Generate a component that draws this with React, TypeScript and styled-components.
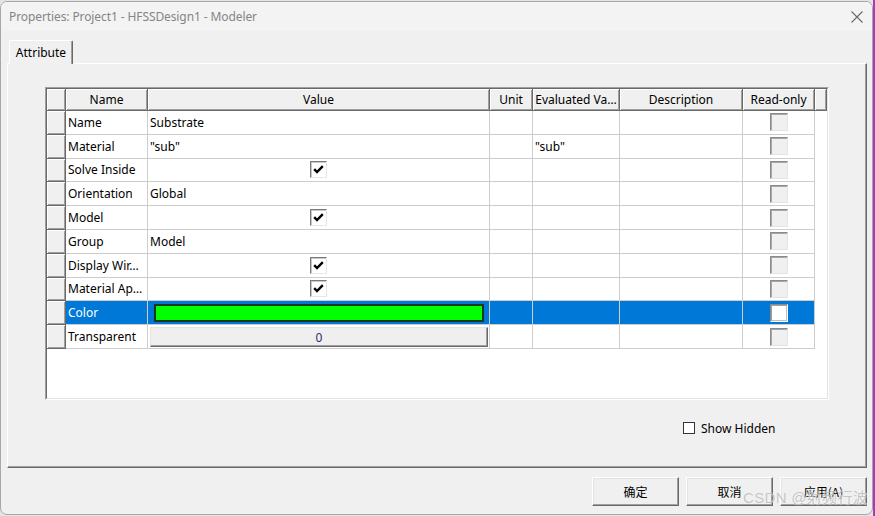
import React from 'react';
import styled, { createGlobalStyle } from 'styled-components';

const GlobalStyle = createGlobalStyle`
  html, body { margin: 0; padding: 0; }
  body {
    width: 875px;
    height: 516px;
    overflow: hidden;
    background: linear-gradient(to right, #e4e4e4 873px, #a53cba 873px);
    font-family: "Noto Sans", "Noto Sans CJK SC", sans-serif;
    font-size: 12px;
    color: #000;
  }
`;

const Window = styled.div`
  position: relative;
  margin-top: 1px;
  width: 873px;
  height: 514px;
  box-sizing: border-box;
  border: 1px solid #a8a8a8;
  border-radius: 7px;
  background: #f0f0f0;
  display: flex;
  flex-direction: column;
  overflow: hidden;
`;

const TitleBar = styled.div`
  height: 29px;
  flex: none;
  display: flex;
  align-items: center;
  justify-content: space-between;
  padding: 0 8px 0 8px;
  background: #f3f3f3;
`;

const Title = styled.span`
  font-size: 12px;
  color: #858585;
  letter-spacing: -0.1px;
`;

const CloseButton = styled.span`
  display: flex;
  width: 14px;
  height: 14px;
  margin-right: 0px;
`;

const Body = styled.div`
  flex: 1;
  display: flex;
  flex-direction: column;
  padding: 9px 5px 0 6px;
`;

const TabStrip = styled.div`
  display: flex;
  height: 23px;
  padding-left: 2px;
  position: relative;
  z-index: 1;
`;

const Tab = styled.div`
  width: 64px;
  height: 24px;
  box-sizing: border-box;
  display: flex;
  align-items: center;
  justify-content: center;
  background: #f0f0f0;
  border-top: 1px solid #ffffff;
  border-left: 1px solid #ffffff;
  border-right: 1px solid #696969;
  box-shadow: inset -1px 0 0 #a0a0a0;
  border-radius: 2px 2px 0 0;
  font-size: 12px;
`;

const Panel = styled.div`
  width: 860px;
  height: 405px;
  box-sizing: border-box;
  border-top: 1px solid #ffffff;
  border-left: 1px solid #ffffff;
  border-right: 1px solid #696969;
  border-bottom: 1px solid #696969;
  box-shadow: inset -1px -1px 0 #a0a0a0;
  padding: 23px 0 0 37px;
  display: flex;
  flex-direction: column;
`;

const GridFrame = styled.div`
  width: 784px;
  height: 313px;
  box-sizing: border-box;
  border-top: 1px solid #a0a0a0;
  border-left: 1px solid #a0a0a0;
  border-right: 1px solid #ffffff;
  border-bottom: 1px solid #ffffff;
`;

const GridInner = styled.div`
  height: 100%;
  box-sizing: border-box;
  border-top: 1px solid #696969;
  border-left: 1px solid #696969;
  border-right: 1px solid #e3e3e3;
  border-bottom: 1px solid #e3e3e3;
  background: #ffffff;
  overflow: hidden;
`;

const Grid = styled.div`
  display: grid;
  grid-template-columns: 19px 82px 342px 43px 87px 123px 72px 12px;
  grid-template-rows: 22px repeat(10, 23.8px);
`;

const HeaderCell = styled.div`
  box-sizing: border-box;
  background: #f0f0f0;
  border-right: 1px solid #696969;
  border-bottom: 1px solid #696969;
  box-shadow: inset 1px 1px 0 #ffffff, inset -1px -1px 0 #a0a0a0;
  display: flex;
  align-items: center;
  justify-content: center;
  white-space: nowrap;
  overflow: hidden;
  font-size: 12px;
`;

const RowHead = styled.div`
  box-sizing: border-box;
  background: #f0f0f0;
  border-right: 1px solid #696969;
  border-bottom: 1px solid #696969;
  box-shadow: inset 1px 1px 0 #ffffff, inset -1px -1px 0 #a0a0a0;
`;

const Cell = styled.div<{ $selected?: boolean; $center?: boolean }>`
  box-sizing: border-box;
  background: ${(p) => (p.$selected ? '#0078d7' : '#ffffff')};
  color: ${(p) => (p.$selected ? '#ffffff' : '#000000')};
  border-right: 1px solid #cdcdcd;
  border-bottom: 1px solid #cdcdcd;
  display: flex;
  align-items: center;
  justify-content: ${(p) => (p.$center ? 'center' : 'flex-start')};
  padding-left: ${(p) => (p.$center ? '0' : '2px')};
  white-space: nowrap;
  overflow: hidden;
  font-size: 12px;
`;

const Filler = styled.div``;

const CheckBox = styled.span`
  width: 17px;
  height: 17px;
  box-sizing: border-box;
  background: #ffffff;
  border-top: 1px solid #7a7a7a;
  border-left: 1px solid #7a7a7a;
  border-right: 1px solid #e6e6e6;
  border-bottom: 1px solid #e6e6e6;
  box-shadow: inset 1px 1px 0 #c8c8c8;
  display: flex;
  align-items: center;
  justify-content: center;
`;

const ReadOnlyBox = styled.span<{ $selected?: boolean }>`
  width: 18px;
  height: 18px;
  box-sizing: border-box;
  background: ${(p) => (p.$selected ? '#ffffff' : '#f0f0f0')};
  border-top: 1px solid #8a8a8a;
  border-left: 1px solid #8a8a8a;
  border-right: 1px solid ${(p) => (p.$selected ? '#ffffff' : '#e3e3e3')};
  border-bottom: 1px solid ${(p) => (p.$selected ? '#ffffff' : '#e3e3e3')};
  box-shadow: ${(p) =>
    p.$selected ? 'inset 1px 1px 0 #a0a0a0, inset -1px -1px 0 #c0c0c0' : 'inset 1px 1px 0 #a8a8a8'};
`;

const ColorCell = styled(Cell)`
  padding: 3px 5px 2px 6px;
  align-items: stretch;
`;

const ColorBar = styled.div`
  flex: 1;
  background: #00ff00;
  border: 2px solid #1c361c;
  box-sizing: border-box;
`;

const ButtonCell = styled(Cell)`
  padding: 2px 1px 1px 2px;
  align-items: stretch;
`;

const ValueButton = styled.div`
  flex: 1;
  box-sizing: border-box;
  background: #efefef;
  border-top: 1px solid #e3e3e3;
  border-left: 1px solid #e3e3e3;
  border-right: 1px solid #696969;
  border-bottom: 1px solid #696969;
  box-shadow: inset -1px -1px 0 #a0a0a0;
  display: flex;
  align-items: center;
  justify-content: center;
  color: #23336b;
  font-size: 12px;
`;

const ShowHiddenRow = styled.label`
  display: flex;
  align-items: center;
  gap: 6px;
  margin: 21px 0 0 638px;
  height: 14px;
  font-size: 12px;
`;

const SmallBox = styled.span`
  width: 12px;
  height: 12px;
  box-sizing: border-box;
  background: #ffffff;
  border: 1px solid #333333;
`;

const ButtonRow = styled.div`
  display: flex;
  justify-content: flex-end;
  gap: 7px;
  margin-top: 9px;
  padding-right: 0px;
`;

const DialogButton = styled.button`
  width: 87px;
  height: 29px;
  box-sizing: border-box;
  background: #f0f0f0;
  border-top: 1px solid #ffffff;
  border-left: 1px solid #ffffff;
  border-right: 1px solid #696969;
  border-bottom: 1px solid #696969;
  box-shadow: inset -1px -1px 0 #a0a0a0, inset 1px 1px 0 #e3e3e3;
  font-family: "Noto Sans CJK SC", "Noto Sans", sans-serif;
  font-size: 12px;
  color: #000;
  padding: 0;
`;

const Watermark = styled.span`
  position: absolute;
  right: 4px;
  bottom: 7px;
  font-family: "Liberation Sans", "Noto Sans CJK SC", sans-serif;
  font-size: 15px;
  color: rgba(150, 150, 150, 0.55);
  text-shadow: 0 0 1px rgba(255, 255, 255, 0.9);
  pointer-events: none;
  letter-spacing: 0.3px;
`;

const Check = () => (
  <svg width="11" height="9" viewBox="0 0 11 9">
    <path d="M1.2 4.2 L4 7 L9.8 1.2" fill="none" stroke="#000" strokeWidth="2.4" />
  </svg>
);

type Row = {
  name: string;
  value?: string;
  evaluated?: string;
  kind?: 'text' | 'check' | 'color' | 'button';
  selected?: boolean;
};

const rows: Row[] = [
  { name: 'Name', value: 'Substrate' },
  { name: 'Material', value: '"sub"', evaluated: '"sub"' },
  { name: 'Solve Inside', kind: 'check' },
  { name: 'Orientation', value: 'Global' },
  { name: 'Model', kind: 'check' },
  { name: 'Group', value: 'Model' },
  { name: 'Display Wir…', kind: 'check' },
  { name: 'Material Ap…', kind: 'check' },
  { name: 'Color', kind: 'color', selected: true },
  { name: 'Transparent', kind: 'button', value: '0' },
];

const headers = ['Name', 'Value', 'Unit', 'Evaluated Va…', 'Description', 'Read-only'];

function ValueCell({ row }: { row: Row }) {
  const sel = row.selected;
  if (row.kind === 'check') {
    return (
      <Cell $center $selected={sel}>
        <CheckBox>
          <Check />
        </CheckBox>
      </Cell>
    );
  }
  if (row.kind === 'color') {
    return (
      <ColorCell $selected={sel}>
        <ColorBar />
      </ColorCell>
    );
  }
  if (row.kind === 'button') {
    return (
      <ButtonCell $selected={sel}>
        <ValueButton>{row.value}</ValueButton>
      </ButtonCell>
    );
  }
  return <Cell $selected={sel}>{row.value}</Cell>;
}

export default function App() {
  return (
    <>
      <GlobalStyle />
      <Window>
        <TitleBar>
          <Title>Properties: Project1 - HFSSDesign1 - Modeler</Title>
          <CloseButton>
            <svg width="14" height="14" viewBox="0 0 14 14">
              <path d="M1.5 1.5 L12.5 12.5 M12.5 1.5 L1.5 12.5" stroke="#6a6a6a" strokeWidth="1.1" />
            </svg>
          </CloseButton>
        </TitleBar>
        <Body>
          <TabStrip>
            <Tab>Attribute</Tab>
          </TabStrip>
          <Panel>
            <GridFrame>
              <GridInner>
                <Grid>
                  <HeaderCell />
                  {headers.map((h) => (
                    <HeaderCell key={h}>{h}</HeaderCell>
                  ))}
                  <HeaderCell />
                  {rows.map((r) => (
                    <React.Fragment key={r.name}>
                      <RowHead />
                      <Cell $selected={r.selected}>{r.name}</Cell>
                      <ValueCell row={r} />
                      <Cell $selected={r.selected} />
                      <Cell $selected={r.selected}>{r.evaluated}</Cell>
                      <Cell $selected={r.selected} />
                      <Cell $center $selected={r.selected}>
                        <ReadOnlyBox $selected={r.selected} />
                      </Cell>
                      <Filler />
                    </React.Fragment>
                  ))}
                </Grid>
              </GridInner>
            </GridFrame>
            <ShowHiddenRow>
              <SmallBox />
              Show Hidden
            </ShowHiddenRow>
          </Panel>
          <ButtonRow>
            <DialogButton>确定</DialogButton>
            <DialogButton>取消</DialogButton>
            <DialogButton>应用(A)</DialogButton>
          </ButtonRow>
        </Body>
        <Watermark>CSDN @射频行波</Watermark>
      </Window>
    </>
  );
}
